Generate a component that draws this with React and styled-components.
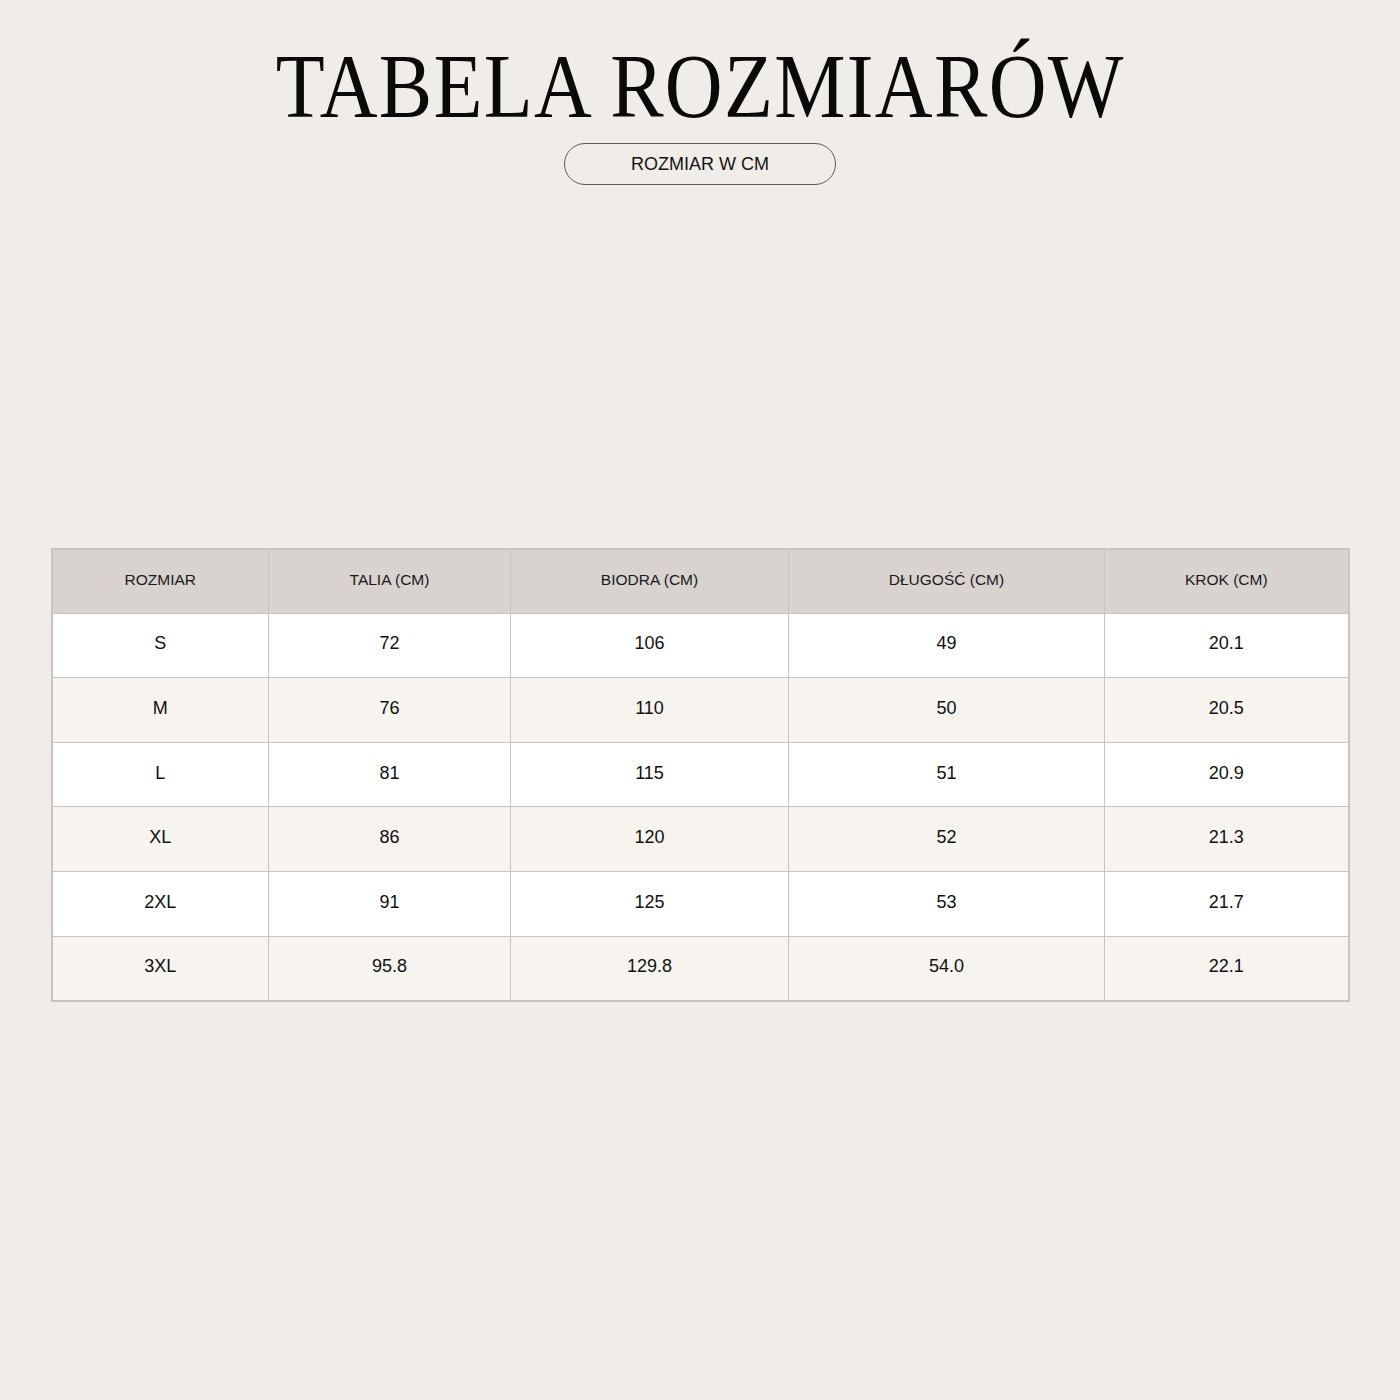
import React from "react";
import styled, { createGlobalStyle } from "styled-components";

const Global = createGlobalStyle`
  html, body { margin: 0; padding: 0; background: #f0ede8; }
  body { font-family: "Liberation Sans", Arial, sans-serif; color: #111; }
`;

const Page = styled.div`
  width: 1400px;
  height: 1400px;
  box-sizing: border-box;
  display: flex;
  flex-direction: column;
  align-items: center;
  padding-top: 39px;
  background: #f0ede8;
`;

const Title = styled.h1`
  margin: 0;
  font-family: "Liberation Serif", "Times New Roman", serif;
  font-weight: 400;
  font-size: 91px;
  line-height: 96px;
  letter-spacing: 1.5px;
  color: #0a0a0a;
  transform: scaleX(0.88);
  white-space: nowrap;
`;

const Pill = styled.div`
  margin-top: 8px;
  width: 272px;
  height: 42px;
  box-sizing: border-box;
  border: 1px solid #5e5e5e;
  border-radius: 21px;
  display: flex;
  align-items: center;
  justify-content: center;
  font-size: 18px;
  color: #151515;
`;

const Table = styled.table`
  margin-top: 363px;
  width: 1297px;
  border-collapse: collapse;
  table-layout: fixed;
  border: 2px solid #c8c4bf;
`;

const HeadCell = styled.th`
  height: 64px;
  box-sizing: border-box;
  padding: 0 0 3px;
  background: #d8d3cf;
  border: 1.5px solid #c8c4bf;
  font-weight: 400;
  font-size: 15.5px;
  color: #1a1a1a;
  text-align: center;
`;

const Row = styled.tr`
  background: ${(p) => (p.$alt ? "#f7f4ef" : "#ffffff")};
`;

const Cell = styled.td`
  height: 64.67px;
  padding: 0 0 3px;
  box-sizing: border-box;
  border: 1.5px solid #c8c4bf;
  font-size: 18px;
  color: #111;
  text-align: center;
`;

const cols = [217, 242, 278, 316, 244];
const headers = ["ROZMIAR", "TALIA (CM)", "BIODRA (CM)", "DŁUGOŚĆ (CM)", "KROK (CM)"];
const rows = [
  ["S", "72", "106", "49", "20.1"],
  ["M", "76", "110", "50", "20.5"],
  ["L", "81", "115", "51", "20.9"],
  ["XL", "86", "120", "52", "21.3"],
  ["2XL", "91", "125", "53", "21.7"],
  ["3XL", "95.8", "129.8", "54.0", "22.1"],
];

export default function App() {
  return (
    <>
      <Global />
      <Page>
        <Title>TABELA ROZMIARÓW</Title>
        <Pill>ROZMIAR W CM</Pill>
        <Table>
          <colgroup>
            {cols.map((w, i) => (
              <col key={i} style={{ width: w }} />
            ))}
          </colgroup>
          <thead>
            <tr>
              {headers.map((h) => (
                <HeadCell key={h}>{h}</HeadCell>
              ))}
            </tr>
          </thead>
          <tbody>
            {rows.map((r, i) => (
              <Row key={r[0]} $alt={i % 2 === 1}>
                {r.map((c, j) => (
                  <Cell key={j}>{c}</Cell>
                ))}
              </Row>
            ))}
          </tbody>
        </Table>
      </Page>
    </>
  );
}
